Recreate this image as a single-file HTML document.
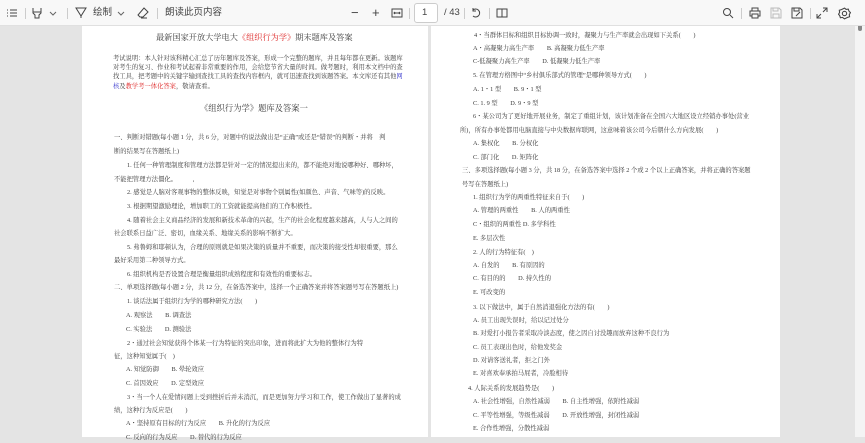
<!DOCTYPE html>
<html><head><meta charset="utf-8">
<style>
*{margin:0;padding:0;box-sizing:border-box}
body{width:865px;height:437px;overflow:hidden;background:#e4e4e4;position:relative;font-family:"Liberation Serif","Noto Serif CJK SC",serif;color:#333}
#tb{position:absolute;left:0;top:0;width:865px;height:26px;background:#f8f8f8;border-bottom:1px solid #e0e0e0;font-family:"Liberation Sans","Noto Sans CJK SC",sans-serif;font-size:9.5px;color:#444}
#tb .a{position:absolute;top:0;height:26px;line-height:26px}
#tb .sep{position:absolute;top:8px;width:1px;height:11px;background:#ccc}
#tb svg{position:absolute;top:7px}
.page{position:absolute;top:26px;height:411px;background:#fff}
.l{position:absolute;white-space:nowrap;font-size:6.3px;line-height:10px;color:#3a3a3a}
.r{color:#d22}.b{color:#33c}
</style></head><body>
<div class="page" style="left:82px;width:346px"></div>
<div class="page" style="left:431px;width:349px"></div>
<div style="position:absolute;left:855px;top:0;width:10px;height:437px;background:#f4f4f4"></div>
<div style="position:absolute;left:858px;top:9px;width:4px;height:22px;background:#888;border-radius:2px"></div>

<div id="tb">
<svg style="left:6px" width="12" height="12" viewBox="0 0 12 12" stroke="#444" fill="none"><path d="M1 3h1M4 3h7M1 6h1M4 6h7M1 9h1M4 9h7"/></svg>
<div class="sep" style="left:25px"></div>
<svg style="left:31px" width="12" height="12" viewBox="0 0 12 12" stroke="#444" fill="none"><path d="M2 1v5l2 2v3h4V8l2-2V1M2 5h8"/></svg>
<svg style="left:49px" width="8" height="12" viewBox="0 0 8 12" stroke="#666" fill="none"><path d="M1 5l3 3 3-3"/></svg>
<div class="sep" style="left:67px"></div>
<svg style="left:75px" width="12" height="12" viewBox="0 0 12 12" stroke="#444" fill="none"><path d="M1 1h10L6 9zM6 9v2"/></svg>
<div class="a" style="left:93px">绘制</div>
<svg style="left:117px" width="8" height="12" viewBox="0 0 8 12" stroke="#666" fill="none"><path d="M1 5l3 3 3-3"/></svg>
<svg style="left:137px" width="12" height="12" viewBox="0 0 12 12" stroke="#444" fill="none"><path d="M7 1l4 4-5 5H3L1 8zM4 11h6"/></svg>
<div class="sep" style="left:157px"></div>
<div class="a" style="left:165px">朗读此页内容</div>
<div class="a" style="left:351px;font-size:13px">−</div>
<div class="a" style="left:372px;font-size:13px">+</div>
<svg style="left:391px" width="12" height="12" viewBox="0 0 12 12" stroke="#444" fill="none"><rect x="1" y="2" width="10" height="8"/><path d="M3 6h6M4 5l-1 1 1 1M8 5l1 1-1 1"/></svg>
<div class="sep" style="left:409px"></div>
<div style="position:absolute;left:414px;top:3px;width:24px;height:20px;border:1px solid #ccc;border-radius:3px;background:#fff;line-height:18px;padding-left:7px">1</div>
<div class="a" style="left:444px">/ 43</div>
<div class="sep" style="left:464px"></div>
<svg style="left:470px" width="12" height="12" viewBox="0 0 12 12" stroke="#444" fill="none"><path d="M3 3a4 4 0 1 1 0 6M3 1v3h3"/></svg>
<div class="sep" style="left:489px"></div>
<svg style="left:496px" width="12" height="12" viewBox="0 0 12 12" stroke="#444" fill="none"><rect x="1" y="2" width="5" height="8"/><rect x="6" y="2" width="5" height="8"/></svg>
<svg style="left:722px" width="12" height="12" viewBox="0 0 12 12" stroke="#444" fill="none"><circle cx="5" cy="5" r="3.5"/><path d="M8 8l3 3"/></svg>
<div class="sep" style="left:741px"></div>
<svg style="left:749px" width="12" height="12" viewBox="0 0 12 12" stroke="#444" fill="none"><path d="M3 4V1h6v3M3 9H1V4h10v5H9M3 7h6v4H3z"/></svg>
<svg style="left:770px" width="12" height="12" viewBox="0 0 12 12" stroke="#bbb" fill="none"><path d="M1 1h8l2 2v8H1zM3 1v3h5V1M3 11V7h6v4"/></svg>
<svg style="left:791px" width="12" height="12" viewBox="0 0 12 12" stroke="#444" fill="none"><path d="M1 1h8l2 2v8H1zM3 1v3h5V1M5 9l4-4"/></svg>
<div class="sep" style="left:810px"></div>
<svg style="left:816px" width="12" height="12" viewBox="0 0 12 12" stroke="#444" fill="none"><path d="M7 1h4v4M11 1L7 5M5 11H1V7M1 11l4-4"/></svg>
<svg style="left:838px" width="13" height="13" viewBox="0 0 12 12" stroke="#444" fill="none"><circle cx="6" cy="6" r="2"/><path d="M6 1l1.5 1.2 2 -.3.6 1.9 1.4 1.4-1.1 1.8.3 2-1.9.6L6 11l-1.8-1.4-2 .3-.6-1.9L.5 6.7 1.5 5l-.3-2 1.9-.6z"/></svg>
</div>

<div class="l" style="left:156px;top:32px;font-size:8.2px;line-height:11px">最新国家开放大学电大<span class="r">《组织行为学》</span>期末题库及答案</div>
<div class="l" style="left:113px;top:54px">考试说明：本人针对该科精心汇总了历年题库及答案，形成一个完整的题库，并且每年都在更新。该题库</div>
<div class="l" style="left:113px;top:63px">对考生的复习、作业和考试起着非常重要的作用，会给您节省大量的时间。做考题时，利用本文档中的查</div>
<div class="l" style="left:113px;top:72px">找工具，把考题中的关键字输到查找工具的查找内容框内，就可迅速查找到该题答案。本文库还有其他<span class="b">网</span></div>
<div class="l" style="left:113px;top:82px"><span class="b">核</span>及<span class="r">教学考一体化答案</span>，敬请查看。</div>
<div class="l" style="left:200px;top:103px;font-size:8.3px;line-height:11px">《组织行为学》题库及答案一</div>
<div class="l" style="left:114px;top:133px">一、判断对错题(每小题 1 分，共 6 分，对题中的说法做出是“正确”或还是“错误”的判断・并将　判</div>
<div class="l" style="left:114px;top:147px">断的结果写在答题纸上)</div>
<div class="l" style="left:127px;top:161px">1. 任何一种管理制度和管理方法都是针对一定的情况提出来的，都不能绝对地说哪种好、哪种坏，</div>
<div class="l" style="left:114px;top:175px">不能把管理方法僵化。　　　,</div>
<div class="l" style="left:127px;top:188px">2. 感觉是人脑对客观事物的整体反映，知觉是对事物个别属性(如颜色、声音、气味等)的反映。</div>
<div class="l" style="left:127px;top:202px">3. 根据期望激励理论，增加职工的工资就能提高他们的工作积极性。</div>
<div class="l" style="left:127px;top:216px">4. 随着社会主义商品经济的发展和新技术革命的兴起，生产的社会化程度越来越高，人与人之间的</div>
<div class="l" style="left:114px;top:229px">社会联系日益广泛、密切，血缘关系、地缘关系的影响不断扩大。</div>
<div class="l" style="left:127px;top:243px">5. 弗鲁姆和耶顿认为，合理的原则就是如果决策的质量并不重要，而决策的接受性却很重要，那么</div>
<div class="l" style="left:114px;top:256px">最好采用第二种领导方式。</div>
<div class="l" style="left:127px;top:270px">6. 组织机构是否设置合理是衡量组织成熟程度和有效性的重要标志。</div>
<div class="l" style="left:114px;top:283px">二、单项选择题(每小题 2 分，共 12 分，在备选答案中，选择一个正确答案并将答案题号写在答题纸上)</div>
<div class="l" style="left:127px;top:297px">1. 谈话法属于组织行为学的哪种研究方法(　　)</div>
<div class="l" style="left:126px;top:311px">A. 观察法　　B. 调查法</div>
<div class="l" style="left:126px;top:325px">C. 实验法　　D. 测验法</div>
<div class="l" style="left:127px;top:339px">2・通过社会知觉获得个体某一行为特征的突出印象，进而将此扩大为他的整体行为特</div>
<div class="l" style="left:114px;top:352px">征，这种知觉属于(　)</div>
<div class="l" style="left:126px;top:365px">A. 知觉防御　　B. 晕轮效应</div>
<div class="l" style="left:126px;top:379px">C. 首因效应　　D. 定型效应</div>
<div class="l" style="left:127px;top:393px">3・当一个人在爱情问题上受到挫折后并未消沉，而是更加努力学习和工作，使工作做出了显著的成</div>
<div class="l" style="left:114px;top:406px">绩，这种行为反应是(　　)</div>
<div class="l" style="left:126px;top:419px">A・坚持原有目标的行为反应　　B. 升化的行为反应</div>
<div class="l" style="left:126px;top:433px">C. 反向的行为反应　　D. 替代的行为反应</div>

<div class="l" style="left:474px;top:31px">4・当群体目标和组织目标协调一致时，凝聚力与生产率就会出现如下关系(　　)</div>
<div class="l" style="left:473px;top:44px">A・高凝聚力高生产率　　B. 高凝聚力低生产率</div>
<div class="l" style="left:473px;top:57px">C-低凝聚力高生产率　　D. 低凝聚力低生产率</div>
<div class="l" style="left:473px;top:71px">5. 在管理方格图中“乡村俱乐部式的管理”是哪种领导方式(　　)</div>
<div class="l" style="left:473px;top:85px">A. 1・1 型　　B. 9・1 型</div>
<div class="l" style="left:473px;top:99px">C. 1. 9 型　　D. 9・9 型</div>
<div class="l" style="left:473px;top:112px">6・某公司为了更好地开展业务，制定了重组计划，该计划准备在全国六大地区设立经销办事处(营业</div>
<div class="l" style="left:460px;top:126px">所)，所有办事处都用电脑直接与中央数据库联网，这意味着该公司今后朝什么方向发展(　　)</div>
<div class="l" style="left:473px;top:139px">A. 集权化　　B. 分权化</div>
<div class="l" style="left:473px;top:153px">C. 部门化　　D. 矩阵化</div>
<div class="l" style="left:462px;top:166px">三、多项选择题(每小题 3 分，共 18 分，在备选答案中选择 2 个或 2 个以上正确答案，并将正确的答案题</div>
<div class="l" style="left:462px;top:180px">号写在答题纸上)</div>
<div class="l" style="left:473px;top:193px">1. 组织行为学的两重性特征来自于(　　)</div>
<div class="l" style="left:473px;top:206px">A. 管理的两重性　　B. 人的两重性</div>
<div class="l" style="left:473px;top:220px">C・组织的两重性 D. 多学科性</div>
<div class="l" style="left:473px;top:234px">E. 多层次性</div>
<div class="l" style="left:473px;top:248px">2. 人的行为特征有(　)</div>
<div class="l" style="left:473px;top:261px">A. 自发的　　B. 有原因的</div>
<div class="l" style="left:473px;top:274px">C. 有目的的　　D. 持久性的</div>
<div class="l" style="left:473px;top:288px">E. 可改变的</div>
<div class="l" style="left:473px;top:303px">3. 以下做法中，属于自然消退强化方法的有(　　)</div>
<div class="l" style="left:473px;top:316px">A. 员工出现失误时，给以记过处分</div>
<div class="l" style="left:473px;top:329px">B. 对爱打小报告者采取冷淡态度，使之因自讨没趣而放弃这种不良行为</div>
<div class="l" style="left:473px;top:343px">C. 员工表现出色时，给他发奖金</div>
<div class="l" style="left:473px;top:356px">D. 对请客送礼者，拒之门外</div>
<div class="l" style="left:473px;top:369px">E. 对喜欢奉承拍马屁者，冷脸相待</div>
<div class="l" style="left:468px;top:384px">4. 人际关系的发展趋势是(　　)</div>
<div class="l" style="left:473px;top:397px">A. 社会性增强，自然性减弱　　B. 自主性增强，依附性减弱</div>
<div class="l" style="left:473px;top:411px">C. 平等性增强，等级性减弱　　D. 开放性增强，封闭性减弱</div>
<div class="l" style="left:473px;top:424px">E. 合作性增强，分散性减弱</div>
</body></html>
